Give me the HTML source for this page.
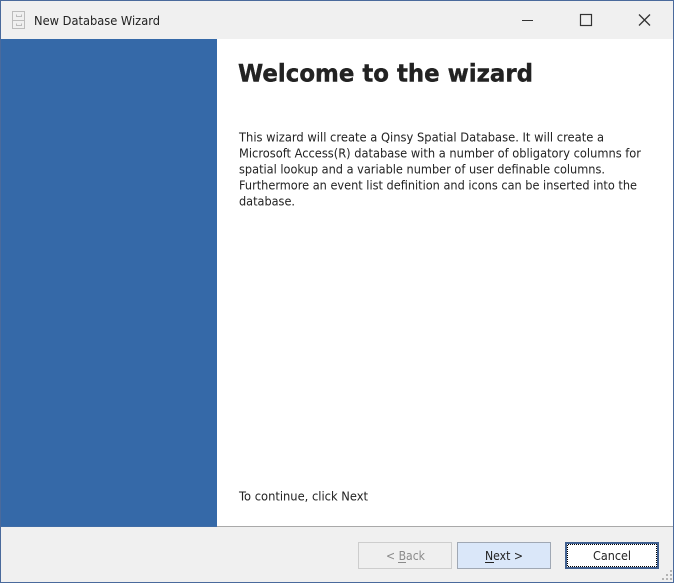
<!DOCTYPE html>
<html><head><meta charset="utf-8">
<style>
html,body{margin:0;padding:0;width:674px;height:583px;overflow:hidden;background:#f0f0f0}
svg{display:block;position:absolute;left:0;top:0}
text{font-family:"DejaVu Sans",sans-serif;font-size:12px;fill:#222}
</style></head><body>
<svg width="674" height="583" viewBox="0 0 674 583" xmlns="http://www.w3.org/2000/svg">
<defs>
<pattern id="dots" x="0" y="0" width="2" height="2" patternUnits="userSpaceOnUse">
<rect x="0" y="0" width="1" height="1" fill="#000"/>
<rect x="1" y="1" width="1" height="1" fill="#000"/>
<rect x="1" y="0" width="1" height="1" fill="#fff"/>
<rect x="0" y="1" width="1" height="1" fill="#fff"/>
</pattern>
</defs>
<rect width="674" height="583" fill="#f0f0f0"/>
<rect x="1" y="39" width="672" height="487" fill="#fff"/>
<rect x="1" y="39" width="216" height="487" fill="#3569a8"/>
<rect x="0" y="526" width="674" height="1" fill="#a9a9a9"/>
<rect x="1" y="526" width="216" height="1" fill="#3f6ca6"/>
<!-- window border -->
<rect x="0.5" y="0.5" width="673" height="582" fill="none" stroke="#4a6a9c"/>
<!-- app icon -->
<g fill="none" stroke="#bcbcbc" stroke-width="1">
<rect x="12.5" y="11.5" width="12" height="17"/>
<path d="M12.5 20.5h12M16.5 14.5v2h5v-2M16.5 23.5v2h5v-2"/>
</g>
<text x="34" y="25" textLength="126" lengthAdjust="spacingAndGlyphs">New Database Wizard</text>
<!-- window buttons -->
<path d="M522 20.5h11" stroke="#333" stroke-width="1" fill="none"/>
<rect x="580.5" y="14.5" width="11" height="11" fill="none" stroke="#333" stroke-width="1.2"/>
<path d="M639 14.5l11 11M650 14.5l-11 11" stroke="#333" stroke-width="1.3" fill="none"/>
<!-- heading -->
<text x="238" y="81.5" textLength="295" lengthAdjust="spacingAndGlyphs" style="font-size:24px;font-weight:bold;fill:#222;stroke:#222;stroke-width:.4">Welcome to the wizard</text>
<!-- body -->
<text x="239" y="141.5" textLength="365" lengthAdjust="spacingAndGlyphs">This wizard will create a Qinsy Spatial Database. It will create a</text>
<text x="239" y="157.5" textLength="402" lengthAdjust="spacingAndGlyphs">Microsoft Access(R) database with a number of obligatory columns for</text>
<text x="239" y="173.5" textLength="366" lengthAdjust="spacingAndGlyphs">spatial lookup and a variable number of user definable columns.</text>
<text x="239" y="189.5" textLength="398" lengthAdjust="spacingAndGlyphs">Furthermore an event list definition and icons can be inserted into the</text>
<text x="239" y="205.5" textLength="56" lengthAdjust="spacingAndGlyphs">database.</text>
<text x="239" y="500.5" textLength="129" lengthAdjust="spacingAndGlyphs">To continue, click Next</text>
<!-- Back -->
<rect x="358.5" y="542.5" width="93" height="26" fill="#efefef" stroke="#cdcdcd"/>
<text x="386" y="560" textLength="39" lengthAdjust="spacingAndGlyphs" style="fill:#8a8a8a">&lt; Back</text>
<path d="M398 562.5h8" stroke="#8a8a8a" stroke-width="1"/>
<!-- Next -->
<rect x="457.5" y="542.5" width="93" height="26" fill="#dae7f9" stroke="#a0a8b4"/>
<text x="485" y="560" textLength="38" lengthAdjust="spacingAndGlyphs">Next &gt;</text>
<path d="M485 562.5h9" stroke="#222" stroke-width="1"/>
<!-- Cancel -->
<rect x="566" y="543" width="92" height="25" fill="#fff" stroke="#41608f" stroke-width="2"/>
<rect x="567" y="544" width="90" height="1" fill="url(#dots)"/>
<rect x="567" y="566" width="90" height="1" fill="url(#dots)"/>
<rect x="567" y="544" width="1" height="23" fill="url(#dots)"/>
<rect x="656" y="544" width="1" height="23" fill="url(#dots)"/>
<text x="593" y="560" textLength="38" lengthAdjust="spacingAndGlyphs">Cancel</text>
<!-- grip -->
<g fill="#b4b4b4">
<rect x="670" y="570" width="2" height="2"/>
<rect x="666" y="574" width="2" height="2"/><rect x="670" y="574" width="2" height="2"/>
<rect x="662" y="578" width="2" height="2"/><rect x="666" y="578" width="2" height="2"/><rect x="670" y="578" width="2" height="2"/>
</g>
</svg>
</body></html>
